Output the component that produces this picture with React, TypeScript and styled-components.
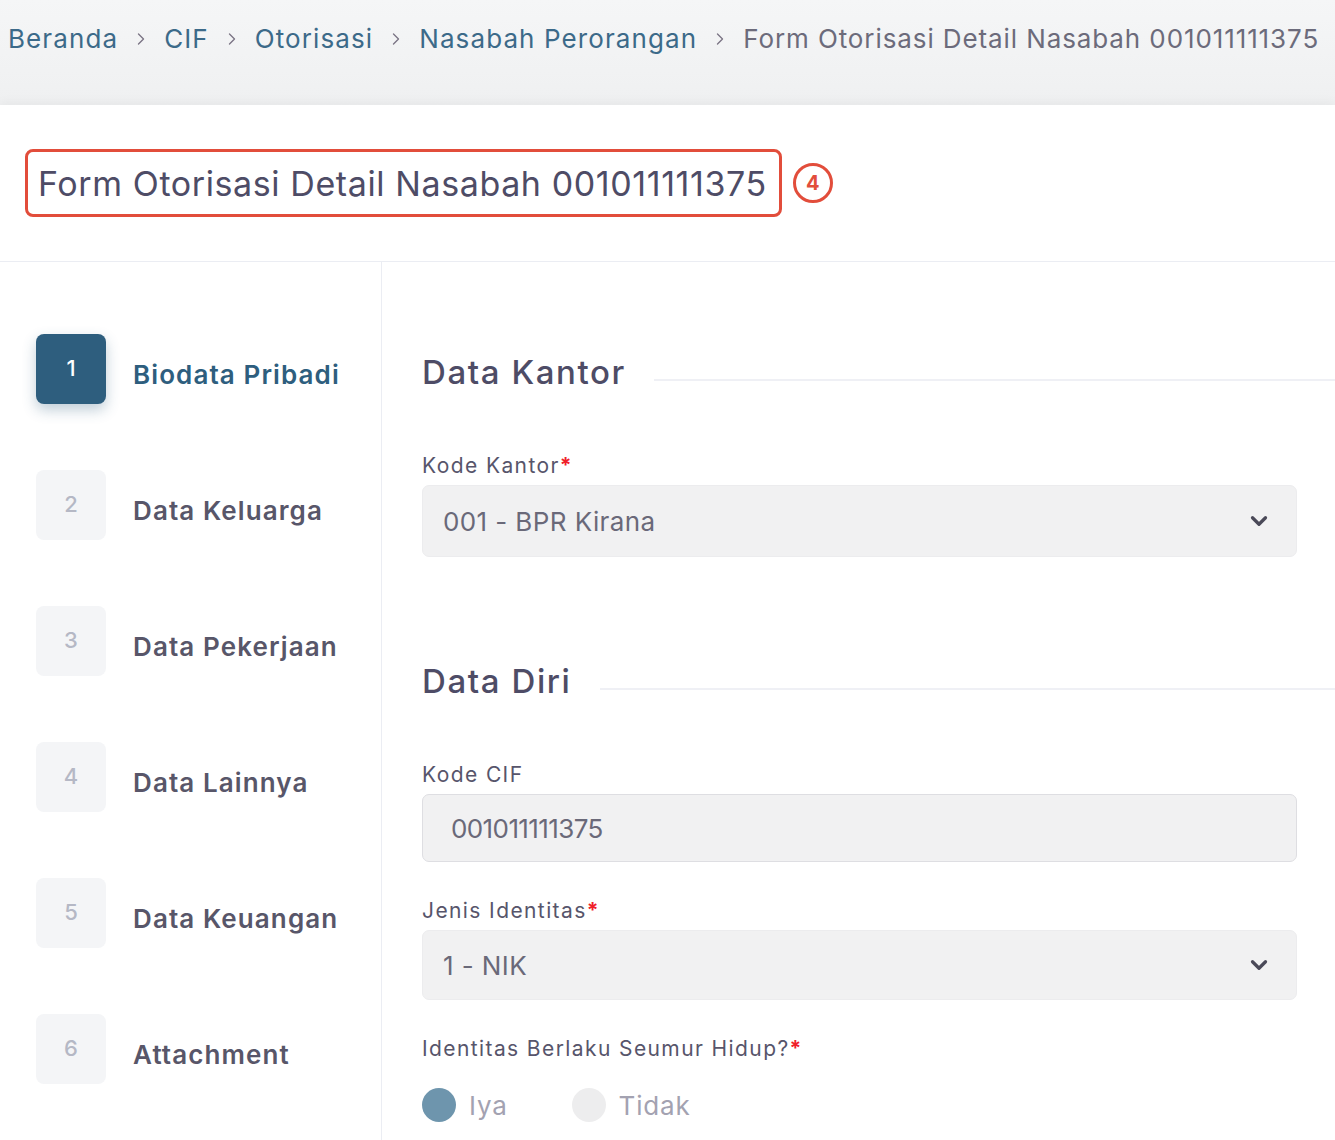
import React from "react"
import styled, { createGlobalStyle } from "styled-components"
import { ChevronRight, ChevronDown } from "lucide-react"

const GlobalStyle = createGlobalStyle`
  html, body {
    margin: 0;
    padding: 0;
    background: #f3f4f5;
    font-family: Inter, "Open Sans", sans-serif;
    font-variant-numeric: proportional-nums;
  }
  * { box-sizing: border-box; }
`

const Page = styled.div`
  width: 1335px;
  min-height: 1140px;
  overflow: hidden;
  background: linear-gradient(#f5f6f7, #eff0f1 105px, #ffffff 105px);
`

const Breadcrumb = styled.nav`
  height: 105px;
  display: flex;
  align-items: flex-start;
  padding: 21px 0 0 8px;
  white-space: nowrap;
`

const Crumb = styled.span<{ $current?: boolean }>`
  font-size: 26px;
  line-height: 36px;
  color: ${({ $current }) => ($current ? "#6c6b7b" : "#3c6a89")};
  letter-spacing: ${({ $current }) => ($current ? "0.9px" : "1.1px")};
`

const Sep = styled.span`
  display: inline-flex;
  align-items: center;
  height: 36px;
  margin: 0 13px;
  color: #7a7484;
`

const Card = styled.div`
  background: #ffffff;
  box-shadow: 0 -3px 10px rgba(0, 0, 0, 0.04);
`

const CardHeader = styled.div`
  height: 157px;
  display: flex;
  align-items: center;
  gap: 11px;
  padding-left: 25px;
  border-bottom: 1px solid #ebedf3;
`

const TitleBox = styled.div`
  height: 68px;
  display: flex;
  align-items: center;
  padding: 0 12px 0 10px;
  border: 3px solid #e24d3b;
  border-radius: 8px;
`

const Title = styled.h1`
  margin: 0;
  font-size: 34px;
  font-weight: 400;
  color: #4e4c66;
  letter-spacing: 0.6px;
`

const Badge = styled.div`
  width: 40px;
  height: 40px;
  border-radius: 50%;
  border: 3px solid #e24d3b;
  color: #e24d3b;
  font-weight: 700;
  font-size: 20px;
  display: flex;
  align-items: center;
  justify-content: center;
`

const Body = styled.div`
  display: grid;
  grid-template-columns: 382px 1fr;
  min-height: 878px;
`

const StepList = styled.div`
  border-right: 1px solid #ebedf3;
  padding: 72px 0 0 36px;
  display: flex;
  flex-direction: column;
  gap: 66px;
`

const Step = styled.div`
  display: flex;
  align-items: center;
  height: 70px;
`

const StepBox = styled.div<{ $active?: boolean }>`
  width: 70px;
  height: 70px;
  flex: none;
  border-radius: 8px;
  display: flex;
  align-items: center;
  justify-content: center;
  padding-bottom: 2px;
  font-size: 22px;
  font-weight: 500;
  background: ${({ $active }) => ($active ? "#2e5e7e" : "#f4f5f7")};
  color: ${({ $active }) => ($active ? "#ffffff" : "#b5b8c5")};
  box-shadow: ${({ $active }) => ($active ? "0 6px 14px rgba(46, 94, 126, 0.3)" : "none")};
`

const StepLabel = styled.div<{ $active?: boolean }>`
  margin-left: 27px;
  padding-top: 10px;
  font-size: 26px;
  font-weight: 600;
  letter-spacing: 1.1px;
  color: ${({ $active }) => ($active ? "#2e5e7e" : "#585669")};
`

const FormArea = styled.div`
  padding: 88px 38px 0 40px;
  display: flex;
  flex-direction: column;
`

const SectionHead = styled.div<{ $top?: number }>`
  display: flex;
  align-items: center;
  height: 44px;
  margin-right: -38px;
  margin-top: ${({ $top }) => $top ?? 0}px;
  margin-bottom: 58px;
`

const SectionTitle = styled.h2`
  margin: 0;
  font-size: 33px;
  font-weight: 500;
  letter-spacing: 1.6px;
  color: #4e4c66;
  white-space: nowrap;
`

const SectionLine = styled.div`
  flex: 1;
  height: 2px;
  margin: 16px 0 0 28px;
  background: #eff0f5;
`

const Group = styled.div`
  margin-bottom: 35px;
`

const Label = styled.div`
  font-size: 21px;
  line-height: 28px;
  letter-spacing: 1.4px;
  color: #57556b;
  margin-bottom: 5px;

  b {
    color: #f0202a;
    font-weight: 700;
  }
`

const Field = styled.div<{ $select?: boolean; $h?: number }>`
  height: ${({ $h }) => $h ?? 70}px;
  display: flex;
  align-items: center;
  justify-content: space-between;
  padding: ${({ $select }) => ($select ? "0 24px 0 20px" : "0 28px")};
  background: #f1f1f2;
  border: 1.5px solid ${({ $select }) => ($select ? "#ececee" : "#dedee2")};
  border-radius: 7px;
  font-size: 26px;
  letter-spacing: ${({ $select }) => ($select ? "0.4px" : "-0.6px")};
  color: #6a6979;
`

const RadioRow = styled.div`
  display: flex;
  align-items: center;
  gap: 64px;
  margin-top: 25px;
`

const Radio = styled.label`
  display: flex;
  align-items: center;
  gap: 13px;
  font-size: 26px;
  letter-spacing: 0.8px;
  color: #a3a2b1;
`

const Dot = styled.span<{ $on?: boolean }>`
  width: 34px;
  height: 34px;
  border-radius: 50%;
  background: ${({ $on }) => ($on ? "#6e95ad" : "#ededee")};
`

const crumbs = ["Beranda", "CIF", "Otorisasi", "Nasabah Perorangan"]

const steps = [
  "Biodata Pribadi",
  "Data Keluarga",
  "Data Pekerjaan",
  "Data Lainnya",
  "Data Keuangan",
  "Attachment",
]

export default function App() {
  return (
    <>
      <GlobalStyle />
      <Page>
        <Breadcrumb>
          {crumbs.map((c) => (
            <React.Fragment key={c}>
              <Crumb>{c}</Crumb>
              <Sep>
                <ChevronRight size={20} strokeWidth={1.6} />
              </Sep>
            </React.Fragment>
          ))}
          <Crumb $current>Form Otorisasi Detail Nasabah 001011111375</Crumb>
        </Breadcrumb>

        <Card>
          <CardHeader>
            <TitleBox>
              <Title>Form Otorisasi Detail Nasabah 001011111375</Title>
            </TitleBox>
            <Badge>4</Badge>
          </CardHeader>

          <Body>
            <StepList>
              {steps.map((s, i) => (
                <Step key={s}>
                  <StepBox $active={i === 0}>{i + 1}</StepBox>
                  <StepLabel $active={i === 0}>{s}</StepLabel>
                </Step>
              ))}
            </StepList>

            <FormArea>
              <SectionHead>
                <SectionTitle>Data Kantor</SectionTitle>
                <SectionLine />
              </SectionHead>
              <Group>
                <Label>
                  Kode Kantor<b>*</b>
                </Label>
                <Field $select $h={72}>
                  <span>001 - BPR Kirana</span>
                  <ChevronDown size={26} strokeWidth={3} color="#4a4958" />
                </Field>
              </Group>

              <SectionHead $top={67}>
                <SectionTitle>Data Diri</SectionTitle>
                <SectionLine />
              </SectionHead>
              <Group>
                <Label>Kode CIF</Label>
                <Field $h={68}>
                  <span>001011111375</span>
                </Field>
              </Group>
              <Group>
                <Label>
                  Jenis Identitas<b>*</b>
                </Label>
                <Field $select>
                  <span>1 - NIK</span>
                  <ChevronDown size={26} strokeWidth={3} color="#4a4958" />
                </Field>
              </Group>
              <Group>
                <Label>
                  Identitas Berlaku Seumur Hidup?<b>*</b>
                </Label>
                <RadioRow>
                  <Radio>
                    <Dot $on />
                    Iya
                  </Radio>
                  <Radio>
                    <Dot />
                    Tidak
                  </Radio>
                </RadioRow>
              </Group>
            </FormArea>
          </Body>
        </Card>
      </Page>
    </>
  )
}
